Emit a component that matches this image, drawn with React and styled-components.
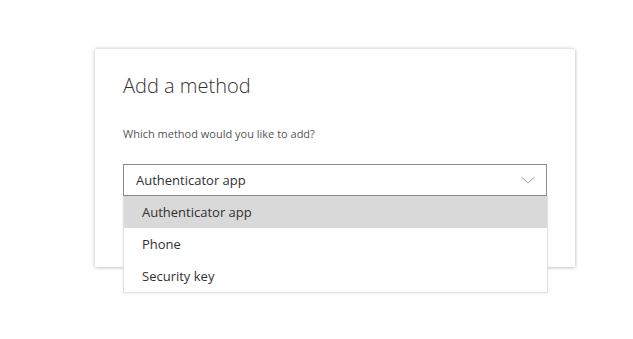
import React from 'react';
import styled, { createGlobalStyle } from 'styled-components';

const GlobalStyle = createGlobalStyle`
  html, body {
    margin: 0;
    padding: 0;
    background: #ffffff;
  }
  body {
    font-family: "Segoe UI", "Open Sans", "Noto Sans", sans-serif;
    color: #323130;
  }
`;

const Page = styled.div`
  width: 633px;
  height: 339px;
  padding: 49px 0 0 95px;
  box-sizing: border-box;
`;

const Card = styled.div`
  width: 480px;
  height: 218px;
  box-sizing: border-box;
  padding: 23px 28px 0 28px;
  background: #fff;
  box-shadow: 0 0 4px rgba(0, 0, 0, 0.22), 0 1px 3px rgba(0, 0, 0, 0.1);
`;

const Title = styled.h1`
  margin: 0;
  font-size: 20px;
  font-weight: 300;
  line-height: 28px;
  color: #333;
`;

const Label = styled.div`
  margin-top: 26px;
  font-size: 11px;
  line-height: 16px;
  color: #555;
`;

const SelectWrap = styled.div`
  position: relative;
  margin-top: 22px;
  width: 424px;
`;

const Select = styled.div`
  height: 32px;
  box-sizing: border-box;
  border: 1px solid #8a8a8a;
  display: flex;
  align-items: center;
  justify-content: space-between;
  padding: 0 10px 0 12px;
  font-size: 13px;
  color: #323130;
`;

const Menu = styled.ul`
  position: absolute;
  top: 32px;
  left: 0;
  right: -1px;
  margin: 0;
  padding: 0;
  list-style: none;
  background: #fff;
  border: 1px solid #e3e3e3;
  border-top: none;
  box-shadow: 0 1px 3px rgba(0, 0, 0, 0.08);
`;

const Item = styled.li`
  height: 32px;
  display: flex;
  align-items: center;
  padding-left: 18px;
  font-size: 13px;
  color: #323130;
  background: ${p => (p.selected ? '#d9d9d9' : 'transparent')};
`;

const Chevron = () => (
  <svg width="16" height="8" viewBox="0 0 16 8" fill="none">
    <path d="M1.5 1l6.5 6 6.5-6" stroke="#a0a0a0" strokeWidth="1" />
  </svg>
);

const options = ['Authenticator app', 'Phone', 'Security key'];

export default function App() {
  return (
    <>
      <GlobalStyle />
      <Page>
        <Card>
          <Title>Add a method</Title>
          <Label>Which method would you like to add?</Label>
          <SelectWrap>
            <Select>
              <span>Authenticator app</span>
              <Chevron />
            </Select>
            <Menu>
              {options.map((o, i) => (
                <Item key={o} selected={i === 0}>{o}</Item>
              ))}
            </Menu>
          </SelectWrap>
        </Card>
      </Page>
    </>
  );
}
